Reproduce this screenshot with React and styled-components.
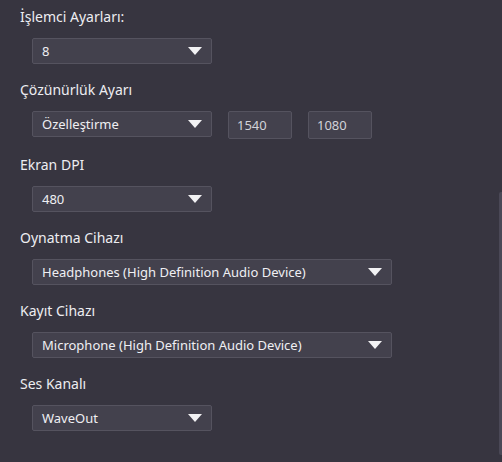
import React from 'react';
import styled, { createGlobalStyle } from 'styled-components';

const GlobalStyle = createGlobalStyle`
  html, body {
    margin: 0;
    padding: 0;
    background: #373540;
  }
  body {
    font-family: 'Noto Sans', 'Open Sans', sans-serif;
    -webkit-font-smoothing: antialiased;
  }
`;

const Panel = styled.div`
  position: relative;
  width: 502px;
  height: 462px;
  box-sizing: border-box;
  padding: 7px 0 0 20px;
  background: #373540;
  color: #e6e6ea;
  overflow: hidden;
`;

const Field = styled.div`
  & + & {
    margin-top: 16px;
  }
`;

const Label = styled.div`
  font-size: 14px;
  line-height: 20px;
  height: 20px;
  margin-bottom: 11px;
  color: #ededf1;
`;

const Row = styled.div`
  display: flex;
  align-items: flex-start;
  gap: 16px;
  padding-left: 12px;
`;

const Select = styled.div`
  box-sizing: border-box;
  width: ${p => (p.$wide ? 360 : 180)}px;
  height: 26px;
  display: flex;
  align-items: center;
  justify-content: space-between;
  padding: 0 9px;
  background: #43414d;
  border: 1px solid #55535f;
  border-radius: 2px;
  font-size: 13px;
  color: #efeff3;
`;

const Caret = styled.span`
  width: 0;
  height: 0;
  border-left: 7px solid transparent;
  border-right: 7px solid transparent;
  border-top: 8px solid #f2f2f4;
`;

const NumberBox = styled.div`
  box-sizing: border-box;
  width: 64px;
  height: 28px;
  display: flex;
  align-items: center;
  padding: 0 8px;
  background: #43414d;
  border: 1px solid #55535f;
  border-radius: 2px;
  font-size: 13px;
  color: #d2d2d8;
`;

const ScrollThumb = styled.div`
  position: absolute;
  right: 0;
  top: 192px;
  width: 3px;
  height: 263px;
  background: #4a4856;
  border-radius: 2px 0 0 2px;
`;

function Dropdown({ value, wide }) {
  return (
    <Select $wide={wide}>
      <span>{value}</span>
      <Caret />
    </Select>
  );
}

export default function App() {
  return (
    <>
      <GlobalStyle />
      <Panel>
        <Field>
          <Label>İşlemci Ayarları:</Label>
          <Row>
            <Dropdown value="8" />
          </Row>
        </Field>
        <Field>
          <Label>Çözünürlük Ayarı</Label>
          <Row>
            <Dropdown value="Özelleştirme" />
            <NumberBox>1540</NumberBox>
            <NumberBox>1080</NumberBox>
          </Row>
        </Field>
        <Field>
          <Label>Ekran DPI</Label>
          <Row>
            <Dropdown value="480" />
          </Row>
        </Field>
        <Field>
          <Label>Oynatma Cihazı</Label>
          <Row>
            <Dropdown wide value="Headphones (High Definition Audio Device)" />
          </Row>
        </Field>
        <Field>
          <Label>Kayıt Cihazı</Label>
          <Row>
            <Dropdown wide value="Microphone (High Definition Audio Device)" />
          </Row>
        </Field>
        <Field>
          <Label>Ses Kanalı</Label>
          <Row>
            <Dropdown value="WaveOut" />
          </Row>
        </Field>
        <ScrollThumb />
      </Panel>
    </>
  );
}
